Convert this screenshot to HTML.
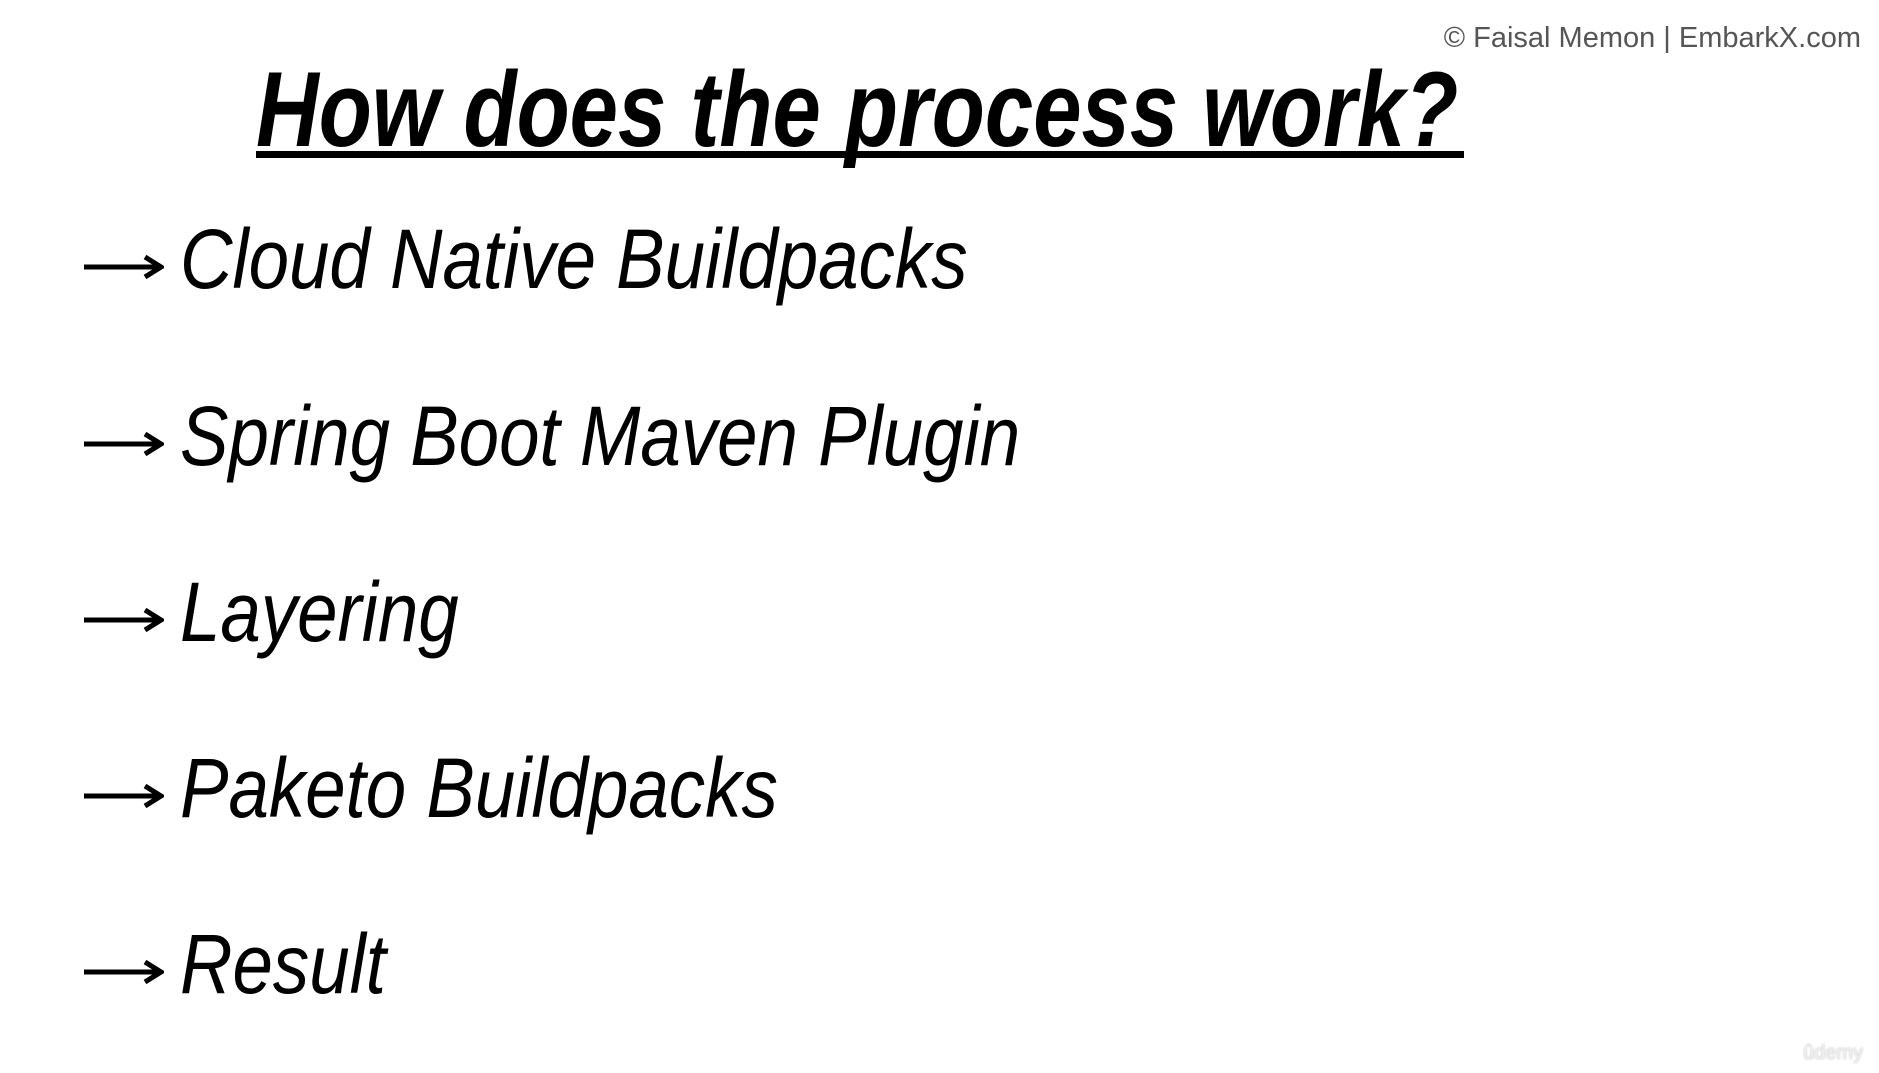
<!DOCTYPE html>
<html><head><meta charset="utf-8"><style>
html,body{margin:0;padding:0;background:#fff;width:1879px;height:1073px;overflow:hidden;position:relative}
.wm{position:absolute;right:18px;top:22px;font:29px "Liberation Sans",sans-serif;color:#555;white-space:nowrap}
.title{position:absolute;left:256px;top:56px;font:bold italic 107px/1 "Liberation Sans",sans-serif;color:#000;white-space:nowrap;transform:scaleX(0.812);transform-origin:left top}
.ul{position:absolute;left:256px;top:151px;width:1208px;height:7px;background:#000}
.item{position:absolute;left:180px;font:italic 84px/1 "Liberation Sans",sans-serif;color:#000;white-space:nowrap;transform:scaleX(0.865);transform-origin:left top}
.arr{position:absolute;left:84px}
</style></head><body>
<div class="wm">© Faisal Memon | EmbarkX.com</div>
<div class="title">How does the process work?</div>
<div class="ul"></div>

<svg class="arr" style="top:254px" width="80" height="26" viewBox="0 0 80 26"><path d="M0 13H74M61 3L77 13L61 23" stroke="#000" stroke-width="5" fill="none"/></svg>
<div class="item" style="top:217px">Cloud Native Buildpacks</div>

<svg class="arr" style="top:431px" width="80" height="26" viewBox="0 0 80 26"><path d="M0 13H74M61 3L77 13L61 23" stroke="#000" stroke-width="5" fill="none"/></svg>
<div class="item" style="top:394px">Spring Boot Maven Plugin</div>

<svg class="arr" style="top:607px" width="80" height="26" viewBox="0 0 80 26"><path d="M0 13H74M61 3L77 13L61 23" stroke="#000" stroke-width="5" fill="none"/></svg>
<div class="item" style="top:570px">Layering</div>

<svg class="arr" style="top:783px" width="80" height="26" viewBox="0 0 80 26"><path d="M0 13H74M61 3L77 13L61 23" stroke="#000" stroke-width="5" fill="none"/></svg>
<div class="item" style="top:746px">Paketo Buildpacks</div>

<svg class="arr" style="top:959px" width="80" height="26" viewBox="0 0 80 26"><path d="M0 13H74M61 3L77 13L61 23" stroke="#000" stroke-width="5" fill="none"/></svg>
<div class="item" style="top:922px">Result</div>

<div style="position:absolute;right:16px;bottom:8px;font:20px 'Liberation Sans',sans-serif;color:#eee;text-shadow:0 0 2px #bbb">ûdemy</div>
</body></html>
